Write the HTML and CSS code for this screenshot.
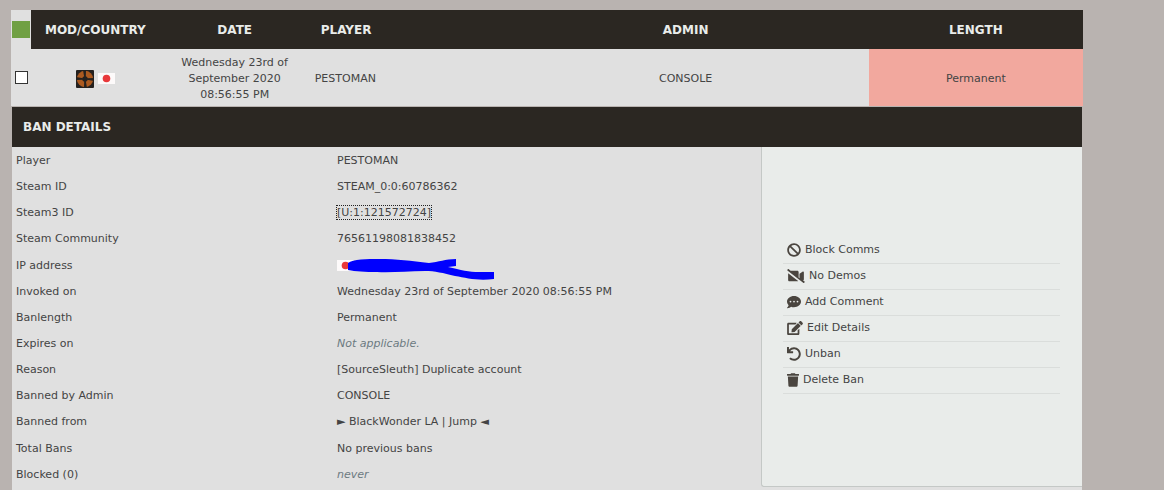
FILE: index.html
```
<!DOCTYPE html>
<html lang="en">
<head>
    <meta charset="utf-8">
    <title>Ban List</title>
    <link rel="stylesheet" href="styles.css">
</head>
<body>

<svg class="sprites" aria-hidden="true">
    <symbol id="flag-jp" viewBox="0 0 17 11">
        <rect width="17" height="11" fill="#fdfafa"/>
        <circle cx="8.500" cy="5.500" r="3.800" fill="#e8383a"/>
    </symbol>
</svg>

<div class="banlist">
    <table class="bans">
        <colgroup>
            <col class="col-tick">
            <col class="col-mod">
            <col class="col-date">
            <col class="col-player">
            <col class="col-admin">
            <col class="col-length">
        </colgroup>
        <thead>
            <tr>
                <td class="tick"><button type="button" class="tick-all" aria-label="Select all"></button></td>
                <th>MOD/COUNTRY</th>
                <th>DATE</th>
                <th class="left">PLAYER</th>
                <th>ADMIN</th>
                <th>LENGTH</th>
            </tr>
        </thead>
        <tbody>
            <tr>
                <td class="tick"><input type="checkbox" aria-label="Select ban"></td>
                <td>
                    <div class="mod">
                        <svg class="game" viewBox="0 0 18 18" aria-label="Team Fortress 2">
                            <rect width="18" height="18" rx="1" fill="#25211f"/>
                            <circle cx="9" cy="9" r="8.200" fill="#ac5a20"/>
                            <path d="M7 0L8.200 7L9.800 7L10 0ZM18 8L11 8.200L11 9.800L18 11ZM11 18L9.800 11L8.200 11L8 18ZM0 10L7 9.800L7 8.200L0 7Z" fill="#25211f"/>
                            <circle cx="9" cy="9" r="2.700" fill="#25211f"/>
                        </svg>
                        <svg class="flag"><use href="#flag-jp"/></svg>
                    </div>
                </td>
                <td>Wednesday 23rd of September 2020 08:56:55 PM</td>
                <td class="left">PESTOMAN</td>
                <td>CONSOLE</td>
                <td class="permanent">Permanent</td>
            </tr>
        </tbody>
    </table>

    <div class="details">
        <h3>BAN DETAILS</h3>
        <table class="info">
            <tbody>
                <tr>
                    <th>Player</th>
                    <td>PESTOMAN</td>
                    <td class="side" rowspan="13">
                        <ul class="actions">
                            <li><a href="#"><svg width="14" height="14" viewBox="0 0 512 512"><path d="M256 8C119 8 8 119 8 256s111 248 248 248 248-111 248-248S393 8 256 8zm130 118c66 66 69 166 20 235L151 106c69-49 169-46 235 20zM126 386c-66-66-69-166-20-235l255 255c-69 49-169 46-235-20z"/></svg>Block Comms</a></li>
                            <li><a href="#"><svg width="18" height="14" viewBox="0 0 640 512"><path d="M634 458l-55-42c15 0 29-12 29-29V125c0-25-29-40-51-26l-109 75v161l-32-25V112c0-26-22-48-48-48H124L46 4C39-2 29-1 23 6L3 31c-5 7-4 17 3 23l588 454c7 6 17 5 23-3l20-25c5-7 4-17-3-22zM32 400c0 26 22 48 48 48h288c11 0 22-4 30-11L32 154z"/></svg>No Demos</a></li>
                            <li><a href="#"><svg width="14" height="14" viewBox="0 0 512 512"><path d="M256 32C115 32 0 125 0 240c0 50 22 95 58 131-13 50-54 94-55 95-6 7-2 14 5 14 66 0 116-32 141-52 32 12 69 20 107 20 141 0 256-93 256-208S397 32 256 32zM128 272a32 32 0 1 1 0-64 32 32 0 0 1 0 64zm128 0a32 32 0 1 1 0-64 32 32 0 0 1 0 64zm128 0a32 32 0 1 1 0-64 32 32 0 0 1 0 64z"/></svg>Add Comment</a></li>
                            <li><a href="#"><svg width="16" height="14" viewBox="0 0 576 512"><path d="M402.600 83.200l90.200 90.200c3.800 3.800 3.800 10 0 13.800L274.400 405.600l-92.800 10.300c-12.400 1.400-22.900-9.100-21.500-21.500l10.300-92.800L388.800 83.200c3.800-3.800 10-3.800 13.800 0zm162-22.900l-48.800-48.800c-15.200-15.200-39.900-15.200-55.200 0l-35.400 35.400c-3.800 3.800-3.800 10 0 13.800l90.200 90.200c3.800 3.800 10 3.800 13.800 0l35.400-35.400c15.200-15.300 15.200-40 0-55.200zM384 346.200V448H64V128h229.800c3.200 0 6.200-1.300 8.500-3.500l40-40c7.600-7.600 2.200-20.500-8.500-20.500H48C21.500 64 0 85.500 0 112v352c0 26.500 21.500 48 48 48h352c26.500 0 48-21.500 48-48V306.200c0-10.700-12.900-16-20.500-8.500l-40 40c-2.200 2.300-3.500 5.300-3.500 8.500z"/></svg>Edit Details</a></li>
                            <li><a href="#"><svg width="14" height="14" viewBox="0 0 512 512"><path d="M212 224H12c-7 0-12-5-12-12V12C0 5 5 0 12 0h48c7 0 12 5 12 12v78a247 247 0 0 1 185-82c137 0 247 111 247 248S393 504 256 504c-63 0-121-24-165-62-5-5-5-13-1-18l34-34c5-4 12-4 17-1 31 27 71 43 115 43 97 0 176-79 176-176S353 80 256 80c-59 0-111 29-143 73h99c7 0 12 5 12 12v47c0 7-5 12-12 12z"/></svg>Unban</a></li>
                            <li><a href="#"><svg width="12" height="14" viewBox="0 0 448 512"><path d="M432 32H312l-9-19c-4-8-12-13-22-13H167c-9 0-18 5-22 13l-9 19H16C7 32 0 39 0 48v32c0 9 7 16 16 16h416c9 0 16-7 16-16V48c0-9-7-16-16-16zM53 467c2 25 23 45 48 45h246c25 0 46-20 48-45l21-339H32z"/></svg>Delete Ban</a></li>
                        </ul>
                    </td>
                </tr>
                <tr><th>Steam ID</th><td>STEAM_0:0:60786362</td></tr>
                <tr><th>Steam3 ID</th><td><a class="focused" href="#">[U:1:121572724]</a></td></tr>
                <tr><th>Steam Community</th><td><a href="#">76561198081838452</a></td></tr>
                <tr>
                    <th>IP address</th>
                    <td>
                        <div class="ip">
                            <svg class="flag"><use href="#flag-jp"/></svg>
                            <svg class="scribble" viewBox="0 0 158 22" aria-label="Hidden"><path d="M11 5C16 1 30 1 42 1C60 1 74 3 92 5C102 4 108 1 119 1V8L111 9C124 12 132 14 142 14H157V21C140 23 130 20 118 18C106 15 98 13 88 13C70 13 54 15 40 14Q22 14 11 12Z" fill="#0000fe"/></svg>
                        </div>
                    </td>
                </tr>
                <tr><th>Invoked on</th><td>Wednesday 23rd of September 2020 08:56:55 PM</td></tr>
                <tr><th>Banlength</th><td>Permanent</td></tr>
                <tr><th>Expires on</th><td><i>Not applicable.</i></td></tr>
                <tr><th>Reason</th><td>[SourceSleuth] Duplicate account</td></tr>
                <tr><th>Banned by Admin</th><td>CONSOLE</td></tr>
                <tr><th>Banned from</th><td>► BlackWonder LA | Jump ◄</td></tr>
                <tr><th>Total Bans</th><td>No previous bans</td></tr>
                <tr><th>Blocked (0)</th><td><i>never</i></td></tr>
            </tbody>
        </table>
    </div>
</div>

</body>
</html>
```
FILE: styles.css
```
body {
    margin: 0;
    padding: 10px 81px 0 11px;
    background: #b9b3b0;
    color: #444;
    font-family: Verdana, "DejaVu Sans", sans-serif;
    font-size: 11px;
    line-height: 16px;
    overflow: hidden;
}
table {
    width: 100%;
    border-collapse: separate;
    border-spacing: 0;
    table-layout: fixed;
}
a {
    color: inherit;
    text-decoration: none;
}
svg {
    display: block;
    flex: none;
}
.sprites {
    display: none;
}
.flag {
    width: 17px;
    height: 11px;
}

/* list of bans */
.col-tick { width: 20px; }
.col-mod { width: 12%; }
.col-date { width: 14%; }
.col-player { width: 18%; }
.col-length { width: 20%; }

.bans th {
    height: 39px;
    padding: 0 10px;
    background: #2b2722;
    color: #e9ecea;
    font-size: 12px;
}
.bans td {
    padding: 5px 4px 3px;
    background: #e0e0e0;
    text-align: center;
}
.bans tbody td {
    height: 49px;
    border-bottom: 1px solid #b9b3b0;
}
.bans th.left {
    padding-left: 11px;
    text-align: left;
}
.bans td.left {
    padding-left: 5px;
    text-align: left;
}
.bans .tick {
    padding: 0;
}
.bans .permanent {
    background: #f2a89e;
}
.tick-all {
    display: block;
    width: 18px;
    height: 17px;
    margin: 0 auto;
    padding: 0;
    border: 0;
    background: #70a043;
}
.tick input {
    display: block;
    appearance: none;
    width: 13px;
    height: 13px;
    margin: 0 auto;
    border: 1px solid #333;
    background: #fff;
}
.mod {
    display: flex;
    align-items: center;
    justify-content: center;
    gap: 4px;
}
.game {
    width: 18px;
    height: 18px;
}

/* opened ban */
.details {
    margin: 0 1px;
    padding-bottom: 20px;
    background: #e0e0e0;
}
.details h3 {
    margin: 0;
    padding: 0 11px;
    background: #2b2722;
    color: #e9ecea;
    font-size: 12px;
    line-height: 40px;
}
.info th, .info td {
    box-sizing: border-box;
    height: 26px;
    padding: 2px 4px 0;
    text-align: left;
    font-weight: normal;
}
.info th {
    width: 30%;
}
.info i {
    color: #6c7a80;
}
.info .side {
    width: 30%;
    height: 340px;
    padding: 0 22px 2px 21px;
    border-left: 1px solid #c4c8c6;
    border-bottom: 1px solid #c4c8c6;
    border-bottom-left-radius: 3px;
    background: #e9ecea;
}
.focused {
    outline: 1px dotted #222;
}
.ip {
    position: relative;
    padding: 2px 0 3px;
}
.scribble {
    position: absolute;
    left: 0;
    top: 0;
    width: 158px;
    height: 22px;
}
.actions {
    margin: 0;
    padding: 0;
    list-style: none;
}
.actions li {
    border-bottom: 1px solid #dadddb;
}
.actions a {
    display: flex;
    align-items: center;
    gap: 4px;
    height: 25px;
    padding-left: 4px;
}
.actions svg {
    fill: #4a453f;
}
```
